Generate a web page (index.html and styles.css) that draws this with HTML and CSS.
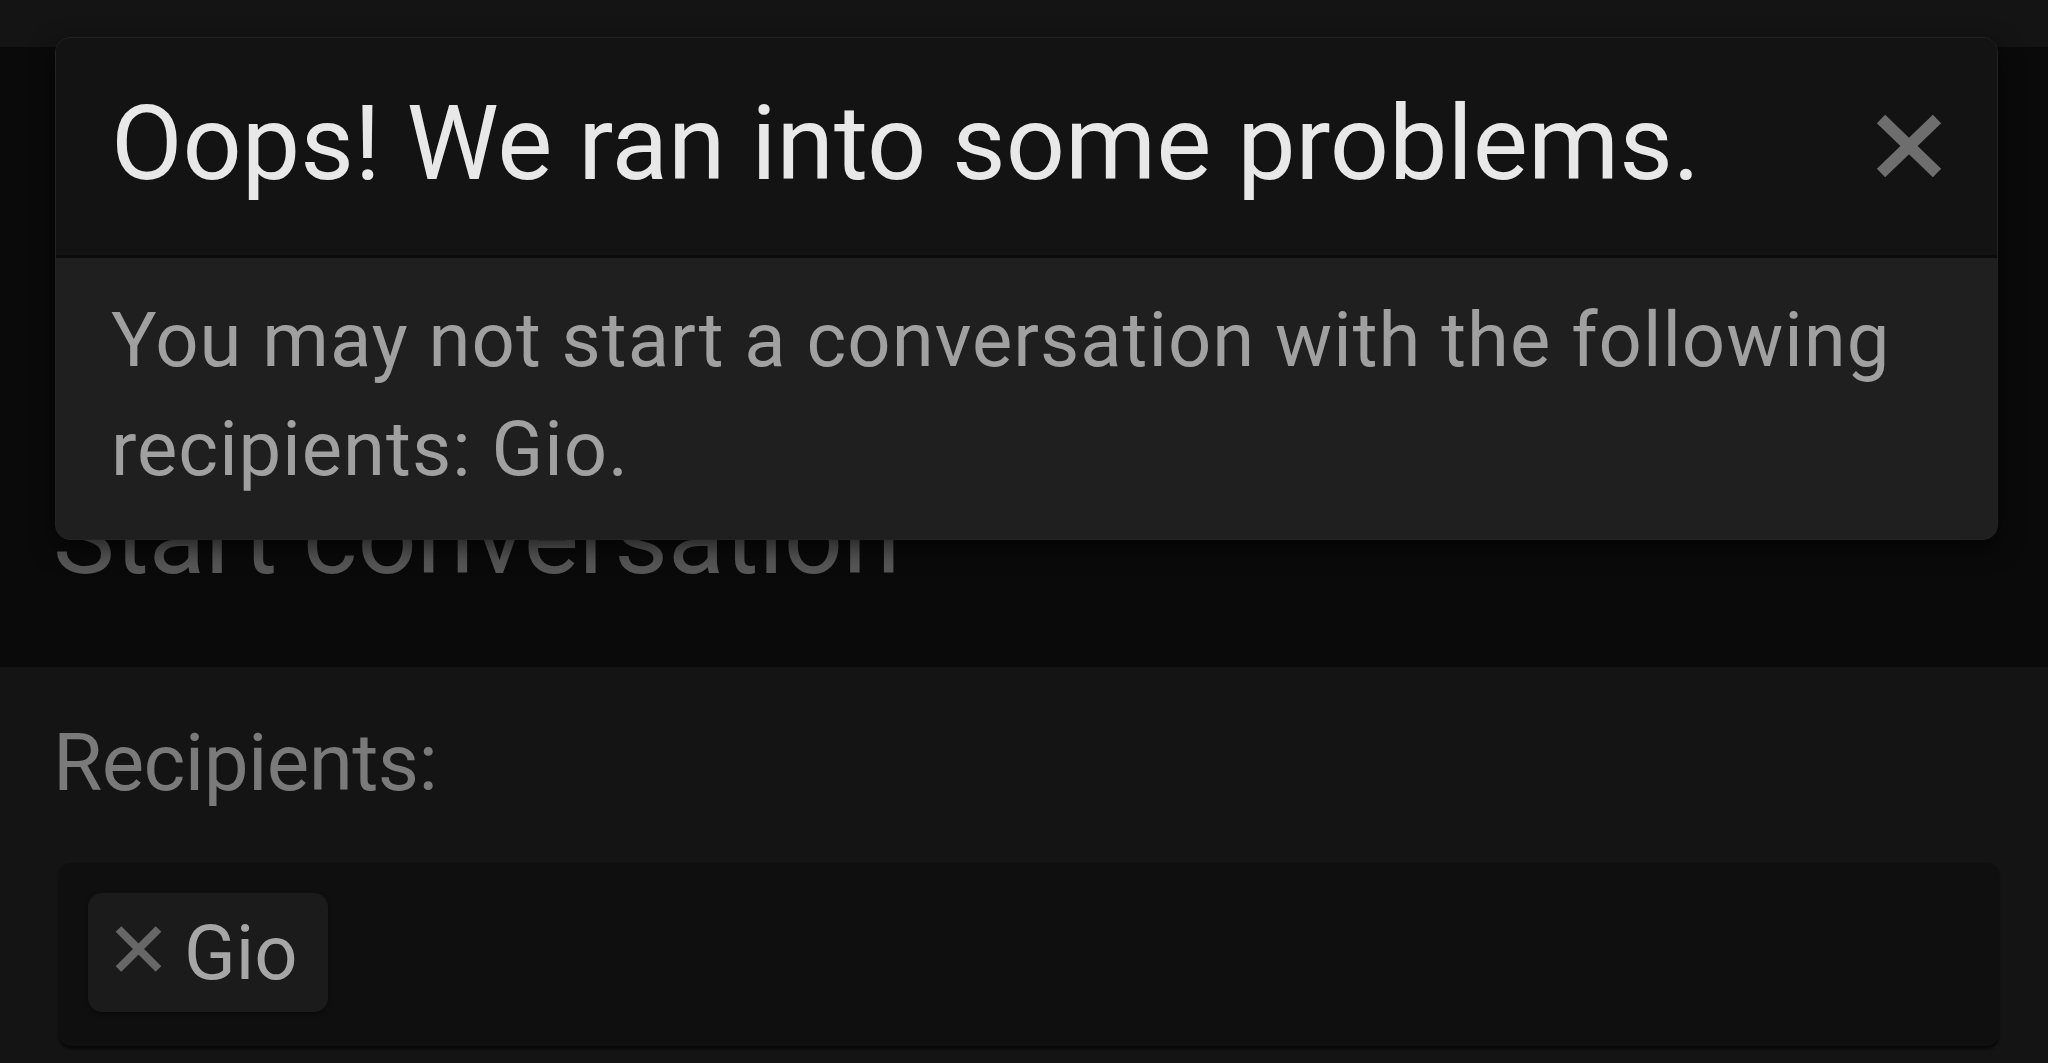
FILE: index.html
```html
<!DOCTYPE html>
<html lang="en">
<head>
    <meta charset="UTF-8">
    <meta name="viewport" content="width=device-width, initial-scale=1.0">
    <title>Start conversation</title>
    <link rel="stylesheet" href="styles.css">
</head>
<body>
    <div class="topbar"></div>

    <div class="page-head">
        <h1>Start conversation</h1>
    </div>

    <div class="panel">
        <label class="field-label">Recipients:</label>
        <div class="token-input">
            <span class="token">
                <svg class="token-remove" viewBox="0 0 50 50" width="51" height="50">
                    <path d="M5 5 L45 45 M45 5 L5 45" stroke="#676767" stroke-width="8" fill="none"/>
                </svg>
                <span class="token-name">Gio</span>
            </span>
        </div>
    </div>

    <!-- error overlay -->
    <div class="overlay">
        <div class="overlay-header">
            <span class="overlay-title">Oops! We ran into some problems.</span>
            <svg class="overlay-close" viewBox="0 0 68 66" width="68" height="66">
                <path d="M6 6 L62 60 M62 6 L6 60" stroke="#6e6e6e" stroke-width="12" fill="none"/>
            </svg>
        </div>
        <div class="overlay-body">
            You may not start a conversation with the following recipients: Gio.
        </div>
    </div>
</body>
</html>
```

FILE: styles.css
```css
body {
    font-family: Roboto, "Noto Sans", sans-serif;
    background-color: #0a0a0a;
    margin: 0;
    padding: 0;
    position: relative;
    min-height: 1063px;
}

.topbar {
    height: 47px;
    background-color: #141414;
}

/* Page heading (mostly hidden behind the overlay) */
.page-head {
    padding: 428px 55px 67px;
}

.page-head h1 {
    margin: 0 0 0 -2px;
    font-size: 104px;
    font-weight: 400;
    line-height: 125px;
    color: #575757;
}

/* Form panel */
.panel {
    background-color: #141414;
    padding: 48px 49px 17px 59px;
}

.field-label {
    display: block;
    font-size: 80px;
    line-height: 96px;
    letter-spacing: -0.6px;
    color: #7a7a7a;
    margin-left: -6px;
}

.token-input {
    margin-top: 52px;
    height: 183px;
    box-sizing: border-box;
    padding: 30px 29px;
    background-color: #0f0f0f;
    border-radius: 12px;
    box-shadow: 0 3px 3px rgba(0, 0, 0, 0.6);
    display: flex;
    align-items: flex-start;
}

.token {
    display: flex;
    align-items: center;
    height: 119px;
    padding: 0 30px 0 25px;
    background-color: #1b1b1b;
    border-radius: 14px;
    box-shadow: 0 2px 4px rgba(0, 0, 0, 0.4);
}

.token-remove {
    margin-right: 20px;
    margin-top: -8px;
}

.token-name {
    font-size: 76px;
    color: #a6a6a6;
    line-height: 90px;
}

/* Error overlay */
.overlay {
    position: absolute;
    top: 37px;
    left: 55px;
    width: 1943px;
    background-color: #1f1f1f;
    border-radius: 15px;
    border: 1px solid #232323;
    box-sizing: border-box;
    box-shadow: 0 8px 24px rgba(0, 0, 0, 0.6);
    overflow: hidden;
}

.overlay-header {
    display: flex;
    justify-content: space-between;
    align-items: center;
    height: 220px;
    box-sizing: border-box;
    padding: 0 54px 0 55px;
    background-color: #131313;
    border-bottom: 3px solid #0c0c0c;
}

.overlay-title {
    font-size: 104px;
    line-height: 124px;
    color: #e8e8e8;
    margin-top: -6px;
}

.overlay-close {
    margin-top: -2px;
}

.overlay-body {
    padding: 28px 60px 35px 55px;
    font-size: 76px;
    line-height: 109px;
    letter-spacing: 1px;
    color: #a0a0a0;
}
```
